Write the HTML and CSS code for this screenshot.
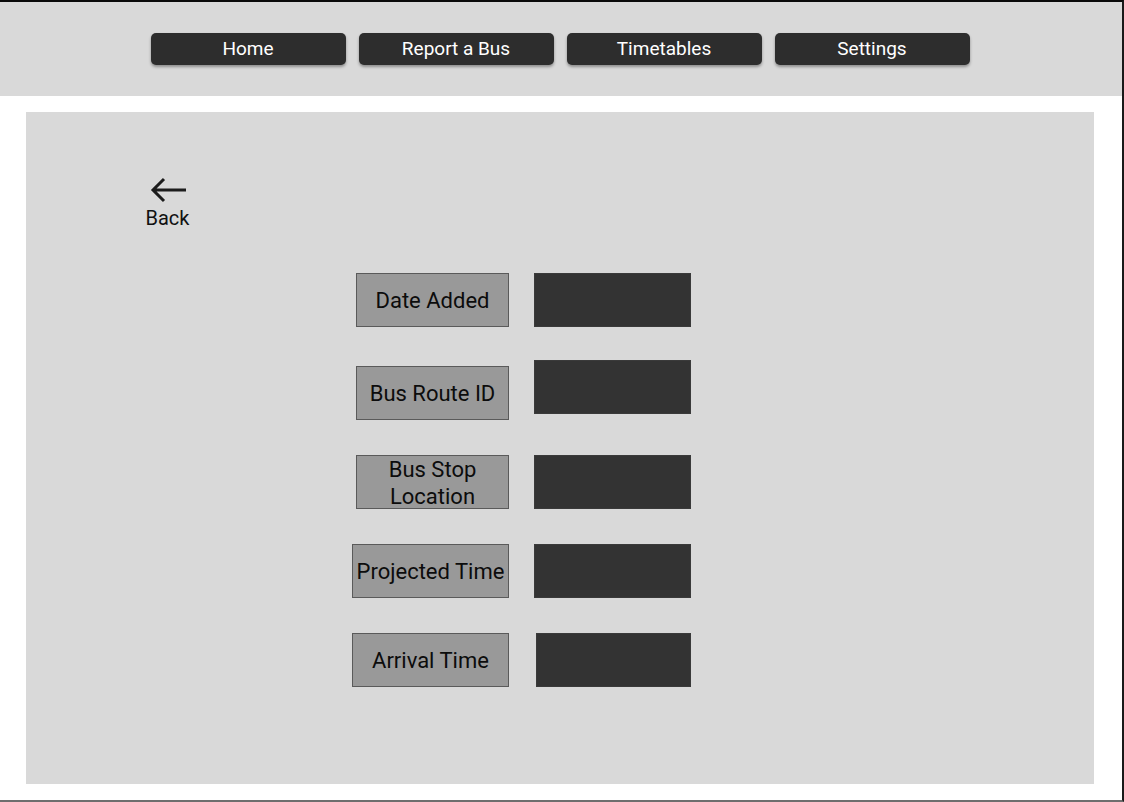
FILE: index.html
```html
<!DOCTYPE html>
<html>
  <head>
    <title>Bus Details</title>
    <meta charset="UTF-8">
    <meta name="viewport" content="width=device-width, initial-scale=1.0">
    <link rel="stylesheet" href="styles.css">
  </head>
  <body>
    <div class="frame">
      <header class="topbar">
        <nav class="nav">
          <a class="nav-btn" href="#">Home</a>
          <a class="nav-btn" href="#">Report a Bus</a>
          <a class="nav-btn" href="#">Timetables</a>
          <a class="nav-btn" href="#">Settings</a>
        </nav>
      </header>

      <main class="panel">
        <a class="back" href="#">
          <svg width="40" height="28" viewBox="0 0 40 28">
            <path d="M4 14 H37 M15 3 L4 14 L15 25" fill="none" stroke="#1c1c1c" stroke-width="3"/>
          </svg>
          <span>Back</span>
        </a>

        <div class="details">
          <div class="row">
            <div class="label">Date Added</div>
            <div class="value"></div>
          </div>
          <div class="row row-wide-gap">
            <div class="label">Bus Route ID</div>
            <div class="value raised"></div>
          </div>
          <div class="row">
            <div class="label two-line">Bus Stop Location</div>
            <div class="value"></div>
          </div>
          <div class="row">
            <div class="label wide">Projected Time</div>
            <div class="value"></div>
          </div>
          <div class="row">
            <div class="label wide">Arrival Time</div>
            <div class="value narrow"></div>
          </div>
        </div>
      </main>
    </div>
  </body>
</html>
```

FILE: styles.css
```css
* {
  box-sizing: border-box;
  margin: 0;
  padding: 0;
}

body {
  font-family: Roboto, "Liberation Sans", Arial, sans-serif;
  background-color: #fff;
  color: #111;
}

.frame {
  width: 1124px;
  height: 802px;
  border-top: 2px solid #0a0a0a;
  border-right: 2px solid #1a1a1a;
  border-bottom: 2px solid #6e6e6e;
  overflow: hidden;
}

.topbar {
  height: 94px;
  background-color: #d9d9d9;
  padding-top: 31px;
}

.nav {
  display: flex;
  justify-content: center;
  gap: 13px;
  margin-left: -2px;
}

.nav-btn {
  display: block;
  width: 195px;
  height: 32px;
  line-height: 32px;
  text-align: center;
  background-color: #2d2d2d;
  color: #fff;
  font-size: 19px;
  text-decoration: none;
  border-radius: 5px;
  box-shadow: 0 2px 3px rgba(0, 0, 0, 0.35);
}

.panel {
  margin: 16px 28px 0 26px;
  height: 672px;
  background-color: #d9d9d9;
  padding: 64px 0 0 120px;
}

.back {
  display: flex;
  flex-direction: column;
  align-items: center;
  gap: 3px;
  width: 43px;
  color: #111;
  text-decoration: none;
  font-size: 20px;
  line-height: 22px;
}

.back svg {
  display: block;
  margin-left: 2px;
}

.details {
  display: flex;
  flex-direction: column;
  gap: 35px;
  margin-top: 44px;
  margin-left: 206px;
}

.row {
  display: flex;
  align-items: flex-start;
  height: 54px;
}

.row-wide-gap {
  margin-top: 4px;
}

.label {
  width: 153px;
  height: 54px;
  margin-left: 4px;
  margin-right: 25px;
  padding-top: 2px;
  background-color: #999;
  border: 1px solid #5a5a5a;
  display: flex;
  align-items: center;
  justify-content: center;
  text-align: center;
  font-size: 22px;
  line-height: 28px;
  color: #0c0c0c;
}

.label.wide {
  width: 157px;
  margin-left: 0;
}

.label.two-line {
  padding: 1px 26px 0;
  line-height: 27px;
}

.value {
  width: 157px;
  height: 54px;
  background-color: #333;
  border: 1px solid #3a3a3a;
}

.value.raised {
  margin-top: -6px;
}

.value.narrow {
  width: 155px;
  margin-left: 2px;
}
```
